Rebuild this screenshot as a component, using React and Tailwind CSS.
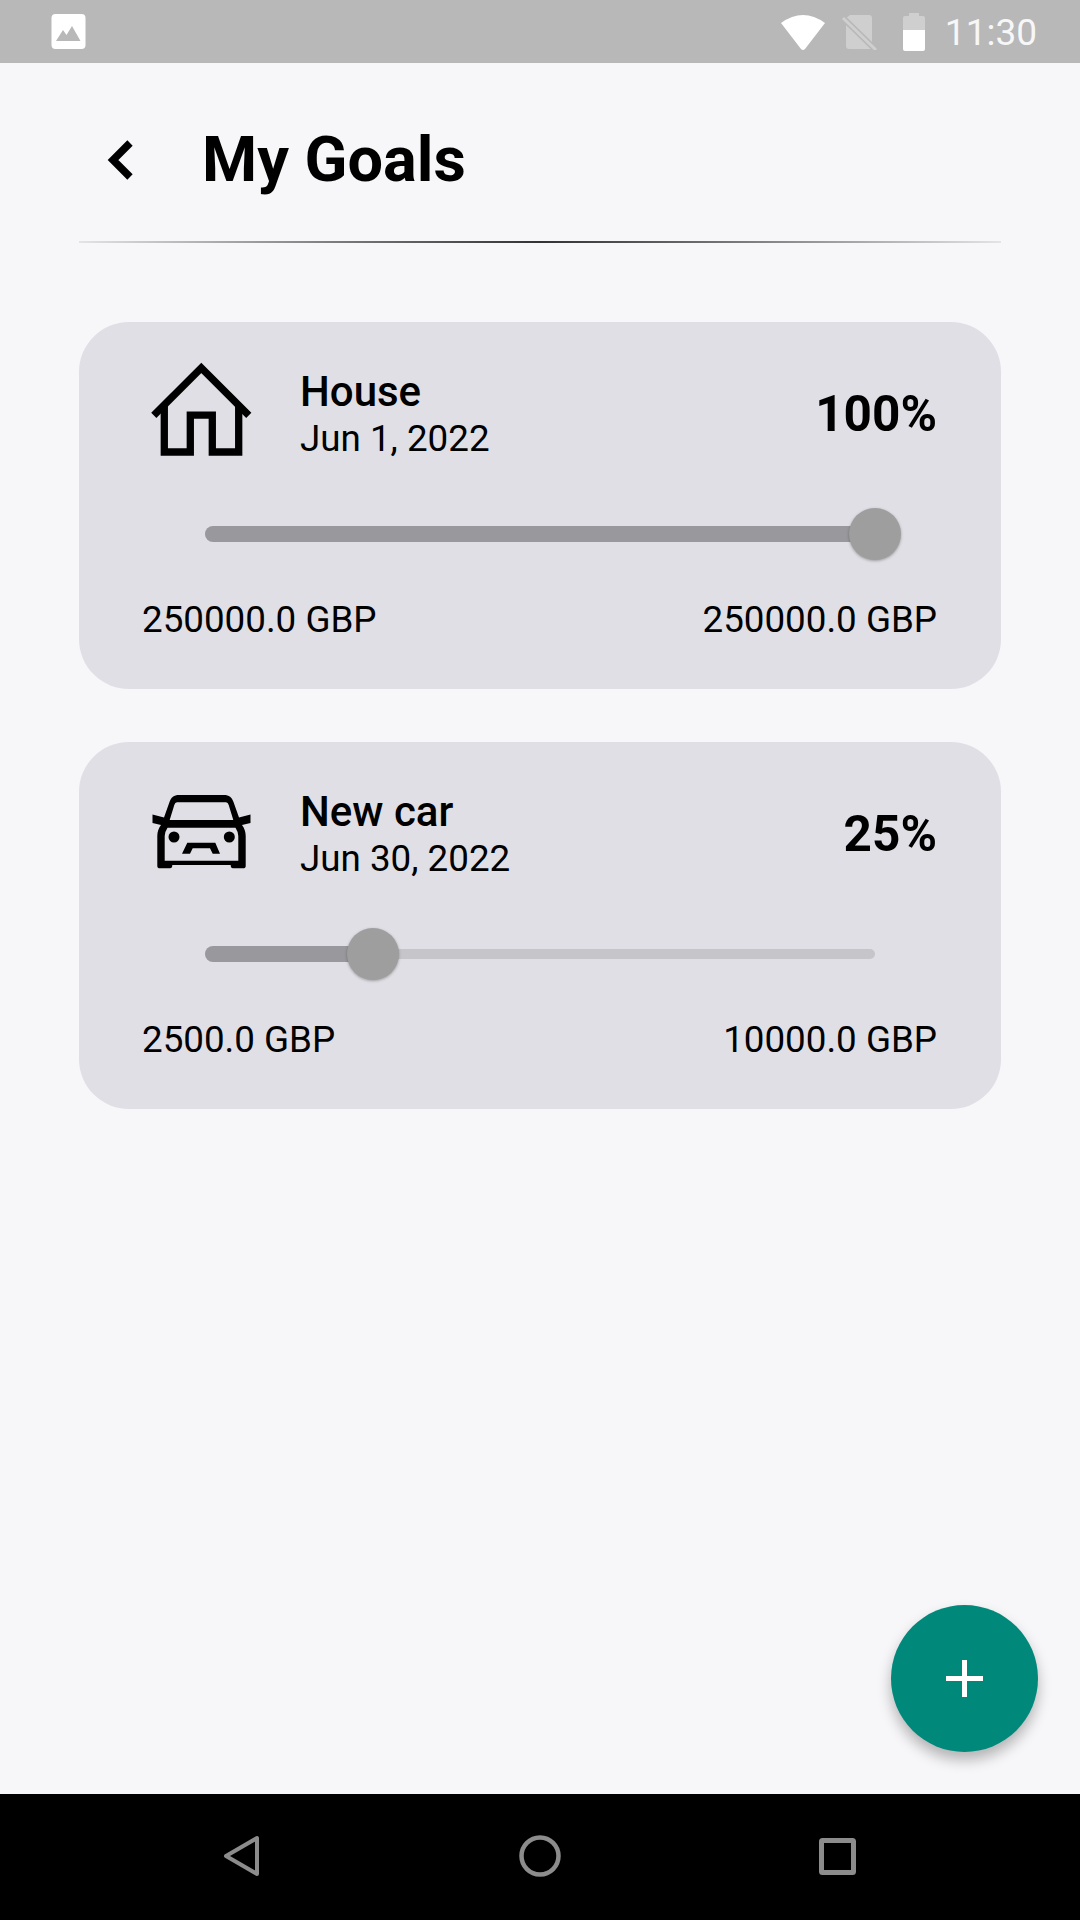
const goals = [
  { id: 'house', name: 'House', date: 'Jun 1, 2022', percent: 100, saved: '250000.0 GBP', target: '250000.0 GBP' },
  { id: 'car', name: 'New car', date: 'Jun 30, 2022', percent: 25, saved: '2500.0 GBP', target: '10000.0 GBP' },
];

const HouseIcon = () => (
  <svg width="115" height="110" viewBox="0 0 115 110" className="shrink-0">
    <path d="M10.8 57.3L58.3 9.9L105.8 57.3" fill="none" stroke="#000" strokeWidth="7.3" />
    <path d="M21.3 47V94H47.3V57.2H69.3V94H95.7V47" fill="none" stroke="#000" strokeWidth="7.3" />
  </svg>
);

const CarIcon = () => (
  <svg width="115" height="110" viewBox="0 0 115 110" className="shrink-0">
    <path
      fillRule="evenodd"
      d="M36 17H81C86 17 89 19.5 90.5 24L96 39.5L107.5 36.5L107.5 45L99 47C101.5 50 102.7 54 102.7 58V88Q102.7 90.3 100 90.3H90Q87.7 90.3 87.7 87H29.3Q29.3 90.3 27 90.3H17Q14.3 90.3 14.3 88V58C14.3 54 15.5 50 18 47L9.5 45V36.5L21 39.5L26.5 24C28 19.5 31 17 36 17ZM34 24.3H83Q85 24.3 85.7 27L90.3 42H26.7L31.3 27Q32 24.3 34 24.3ZM24.5 49.7H92.5Q95.3 54 95.3 58V82.7H21.7V58Q21.7 54 24.5 49.7Z"
    />
    <circle cx="31" cy="59" r="5.5" />
    <circle cx="86.3" cy="59" r="5.5" />
    <path d="M44.3 64.7H72.3L77 75.7H69.7L67 70.3H49.7L47 75.7H39Z" />
  </svg>
);

const Slider = ({ percent }) => (
  <div className="mt-[48px] mx-[62px] h-[52px] relative flex items-center">
    <div className="w-full h-[10px] rounded-full bg-[#c6c5ca]" />
    <div
      className="absolute left-0 top-[18px] h-[16px] rounded-l-full bg-[#99989d]"
      style={{ width: `${percent}%` }}
    />
    <div
      className="absolute top-0 w-[52px] h-[52px] -ml-[26px] rounded-full bg-[#9e9e9e] shadow-[0_1px_3px_rgba(0,0,0,0.3)]"
      style={{ left: `${percent}%` }}
    />
  </div>
);

const GoalCard = ({ goal }) => (
  <div className="rounded-[50px] bg-[#e0dfe5] px-[64px] pt-[44px] pb-[48px] text-black">
    <div className="h-[94px] flex items-center">
      {goal.id === 'house' ? <HouseIcon /> : <CarIcon />}
      <div className="ml-[42px] flex-1 pt-[2px]">
        <div className="text-[42px] leading-[50px] font-medium">{goal.name}</div>
        <div className="text-[36.75px] leading-[44px]">{goal.date}</div>
      </div>
      <div className="text-[49.5px] leading-[56px] font-bold mt-[2px]">{goal.percent}%</div>
    </div>
    <Slider percent={goal.percent} />
    <div className="mt-[39px] -ml-[1px] flex justify-between text-[36.75px] leading-[42px]">
      <span>{goal.saved}</span>
      <span>{goal.target}</span>
    </div>
  </div>
);

const StatusBar = () => (
  <div className="h-[63px] shrink-0 bg-[#b8b8b9] flex items-center justify-between pl-[51px] pr-[43px]">
    <svg width="35" height="35" viewBox="0 0 35 35">
      <rect x="0.5" y="0" width="34" height="35" rx="4" fill="#fff" />
      <path d="M5 27L12 16L15.5 21L21 12L29.5 27Z" fill="#b8b8b9" />
    </svg>
    <div className="flex items-center">
      <svg width="46" height="38" viewBox="0 0 46 38">
        <path d="M1 10Q23 -6 45 10L25 36Q23 38 21 36Z" fill="#fff" />
      </svg>
      <svg width="36" height="36" viewBox="0 0 36 36" className="ml-[16px]">
        <path d="M4 4V32Q4 35 7 35H30V4Q30 1 27 1H8Z" fill="#cfcfd0" />
        <path d="M1 4L34 36" stroke="#b8b8b9" strokeWidth="6" />
        <path d="M1 4L34 36" stroke="#cfcfd0" strokeWidth="3" />
      </svg>
      <svg width="22" height="38" viewBox="0 0 22 38" className="ml-[25px]">
        <path d="M6 0H16V3H20Q22 3 22 5V17H0V5Q0 3 2 3H6Z" fill="#cfcfd0" />
        <path d="M0 17H22V36Q22 38 20 38H2Q0 38 0 36Z" fill="#fff" />
      </svg>
      <span className="ml-[20px] pt-[3px] text-[37px] leading-[42px] text-[#f7f7f7]">11:30</span>
    </div>
  </div>
);

const NavBar = () => (
  <div className="h-[126px] shrink-0 bg-black flex items-center pl-[223px] pb-[2px]">
    <svg width="37" height="42" viewBox="0 0 37 42" fill="none" stroke="#8c8c8c" strokeWidth="4" strokeLinejoin="round">
      <path d="M34 3V39L3 21Z" />
    </svg>
    <svg width="42" height="42" viewBox="0 0 42 42" fill="none" stroke="#8c8c8c" strokeWidth="4.5" className="ml-[259px]">
      <circle cx="21" cy="21" r="18.5" />
    </svg>
    <svg width="37" height="37" viewBox="0 0 37 37" fill="none" stroke="#8c8c8c" strokeWidth="5" strokeLinejoin="round" className="ml-[258px]">
      <rect x="2.5" y="2.5" width="32" height="32" rx="1" />
    </svg>
  </div>
);

export default function App() {
  return (
    <div className="w-[1080px] h-[1920px] flex flex-col bg-[#f7f7f9] font-['Roboto',sans-serif] overflow-hidden">
      <StatusBar />
      <main className="flex-1 relative">
        <div className="h-[178px] flex items-center pl-[103px] pt-[16px]">
          <svg width="40" height="50" viewBox="0 0 40 50" fill="none" stroke="#000" strokeWidth="7.5">
            <path d="M27 8L10 25L27 42" />
          </svg>
          <h1 className="ml-[59px] text-[63px] leading-[70px] font-bold text-black">My Goals</h1>
        </div>
        <div className="mx-[79px] h-[2px] bg-gradient-to-r from-[#e4e4e6] via-[#333333] to-[#e4e4e6]" />
        <div className="mt-[79px] mx-[79px] flex flex-col gap-[53px]">
          {goals.map((goal) => (
            <GoalCard key={goal.id} goal={goal} />
          ))}
        </div>
        <button className="absolute right-[42px] bottom-[42px] w-[147px] h-[147px] rounded-full bg-[#00897b] flex items-center justify-center shadow-[0_8px_14px_rgba(0,0,0,0.28)]">
          <svg width="37" height="37" viewBox="0 0 37 37" fill="#fff">
            <rect x="16" y="0" width="5" height="37" />
            <rect x="0" y="16" width="37" height="5" />
          </svg>
        </button>
      </main>
      <NavBar />
    </div>
  );
}
